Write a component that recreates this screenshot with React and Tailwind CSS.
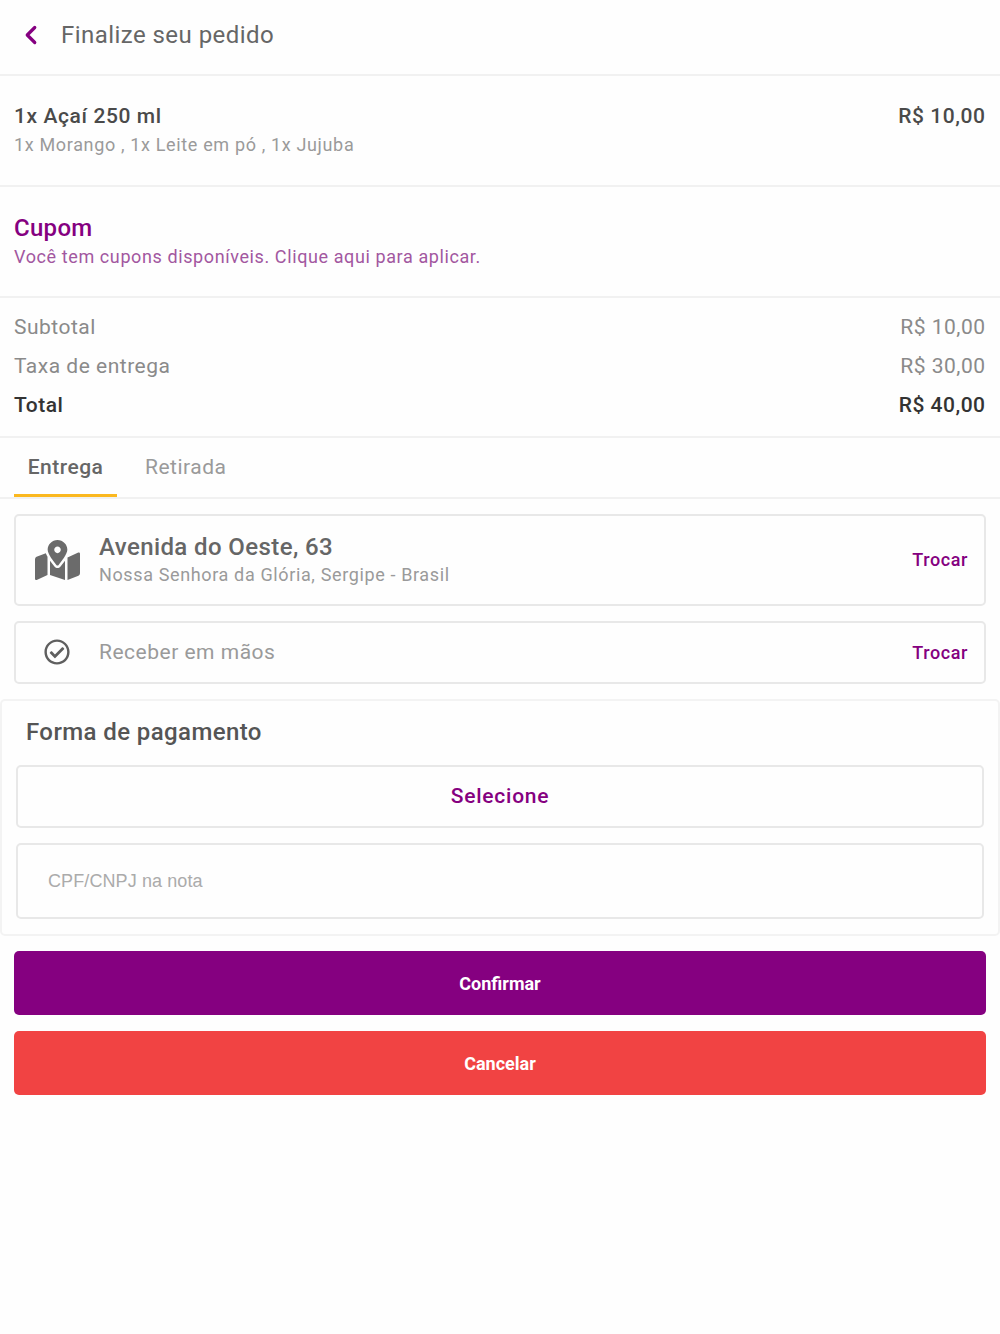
import React from 'react';
import { FaMapMarkedAlt, FaRegCheckCircle } from 'react-icons/fa';
import { ChevronLeft } from 'lucide-react';

const Divider = () => <div className="h-0.5 bg-[#f1f1f1]" />;

function SummaryRow({ label, value, strong }) {
  return (
    <div className={`flex h-[39px] items-center justify-between text-[21px] tracking-[0.5px] ${strong ? 'font-medium text-[#333333]' : 'text-[#8a8a8a]'}`}>
      <span>{label}</span>
      <span>{value}</span>
    </div>
  );
}

export default function App() {
  return (
    <div className="min-h-[1334px] bg-[#fefefe] font-['Roboto',sans-serif]">
      {/* Header */}
      <header className="flex h-[74px] items-center pb-[4px] pl-[16px]">
        <ChevronLeft className="h-[30px] w-[30px] text-[#850080]" strokeWidth={2.6} />
        <h1 className="ml-[15px] text-[24px] tracking-[0.45px] text-[#666666]">Finalize seu pedido</h1>
      </header>
      <Divider />

      {/* Item */}
      <section className="flex h-[109px] justify-between pt-[26px] pr-[14.5px] pl-[14px]">
        <div>
          <p className="text-[21px] leading-[28px] font-medium tracking-[0.6px] text-[#4a4a4a]">1x Açaí 250 ml</p>
          <p className="mt-[2px] text-[18px] leading-[26px] tracking-[0.65px] text-[#9a9a9a]">1x Morango , 1x Leite em pó , 1x Jujuba</p>
        </div>
        <p className="text-[21px] leading-[28px] font-medium tracking-[0.55px] text-[#4a4a4a]">R$ 10,00</p>
      </section>
      <Divider />

      {/* Cupom */}
      <section className="h-[109px] px-[14px] pt-[26px]">
        <p className="text-[24px] leading-[30px] font-medium tracking-[0.3px] text-[#850080]">Cupom</p>
        <p className="mt-[1px] text-[18px] leading-[26px] tracking-[0.6px] text-[#a257a0]">Você tem cupons disponíveis. Clique aqui para aplicar.</p>
      </section>
      <Divider />

      {/* Totais */}
      <section className="h-[138px] pt-[10.5px] pr-[14.5px] pl-[14px]">
        <SummaryRow label="Subtotal" value="R$ 10,00" />
        <SummaryRow label="Taxa de entrega" value="R$ 30,00" />
        <SummaryRow label="Total" value="R$ 40,00" strong />
      </section>
      <Divider />

      {/* Abas */}
      <nav className="flex h-[59px] px-[14px] text-[21px] tracking-[0.5px]">
        <button className="h-full w-[103px] border-b-[3px] border-[#fbb81f] pt-[3px] font-medium text-[#666666]">Entrega</button>
        <button className="ml-[28px] h-full text-[#9a9a9a]">Retirada</button>
      </nav>
      <Divider />

      {/* Endereco */}
      <div className="flex flex-col gap-[15.5px] px-[14px] pt-[15px] pb-[15px]">
        <div className="flex h-[91.5px] items-center rounded-[5px] border-2 border-[#e8e8e8] pr-[16px] pl-[19px]">
          <FaMapMarkedAlt className="h-[40px] w-[45px] text-[#6b6b6b]" />
          <div className="ml-[19px] flex-1">
            <p className="text-[24px] leading-[30px] font-medium tracking-[0.4px] text-[#666666]">Avenida do Oeste, 63</p>
            <p className="text-[18px] leading-[26px] tracking-[0.63px] text-[#9a9a9a]">Nossa Senhora da Glória, Sergipe - Brasil</p>
          </div>
          <span className="text-[18px] font-medium tracking-[0.6px] text-[#850080]">Trocar</span>
        </div>
        <div className="flex h-[63px] items-center rounded-[5px] border-2 border-[#e8e8e8] pr-[16px] pl-[28px]">
          <FaRegCheckCircle className="mb-[2px] h-[26px] w-[26px] text-[#5f5f5f]" />
          <p className="ml-[29px] flex-1 text-[21px] tracking-[0.5px] text-[#9a9a9a]">Receber em mãos</p>
          <span className="text-[18px] font-medium tracking-[0.6px] text-[#850080]">Trocar</span>
        </div>
      </div>

      {/* Pagamento */}
      <section className="flex h-[237px] flex-col rounded-[5px] border-2 border-[#f3f3f3] px-[14px]">
        <h2 className="pt-[16px] pl-[10px] text-[24px] leading-[30px] font-medium tracking-[0.4px] text-[#555555]">Forma de pagamento</h2>
        <button className="mt-[18px] h-[63px] rounded-[5px] border-2 border-[#e8e8e8] text-[21px] font-medium tracking-[0.75px] text-[#850080]">Selecione</button>
        <div className="mt-[15px] flex h-[76px] items-center rounded-[5px] border-2 border-[#e8e8e8] pl-[30px] font-['Liberation_Sans',sans-serif] text-[18px] tracking-[0.1px] text-[#ababab]">CPF/CNPJ na nota</div>
      </section>

      {/* Botoes */}
      <div className="flex flex-col gap-4 px-[14px] pt-[15px]">
        <button className="h-[64px] rounded-[5px] bg-[#850080] text-[18px] font-bold text-white">Confirmar</button>
        <button className="h-[64px] rounded-[5px] bg-[#f14343] text-[18px] font-bold text-white">Cancelar</button>
      </div>
    </div>
  );
}
